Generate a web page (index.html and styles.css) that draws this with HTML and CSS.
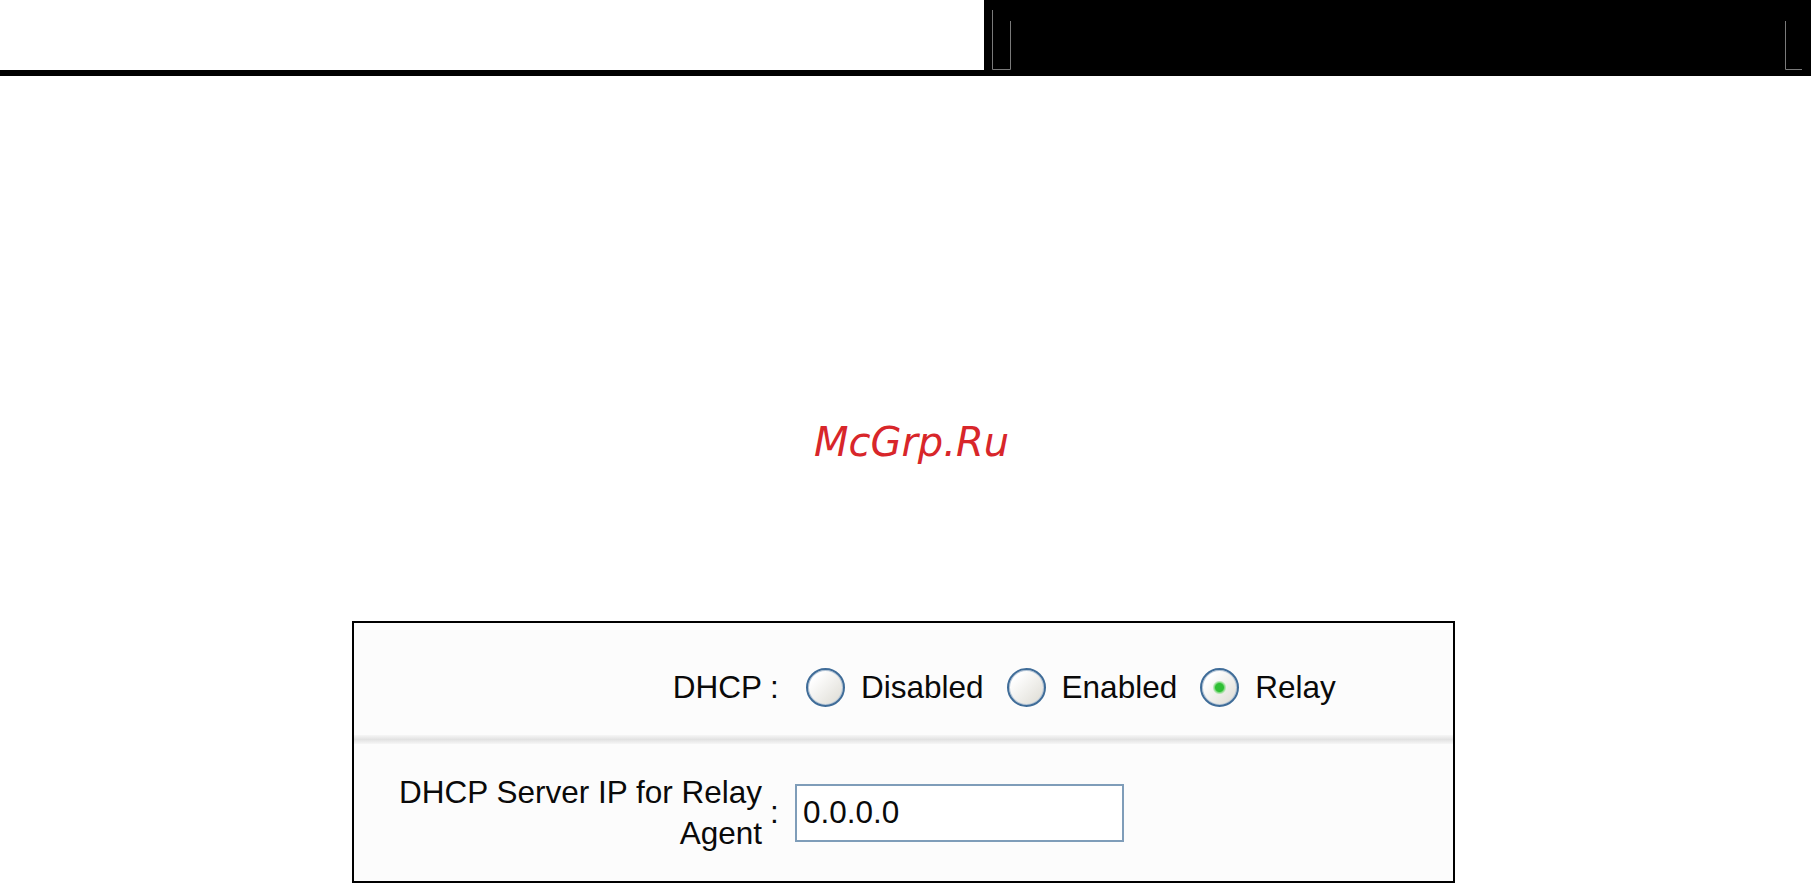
FILE: index.html
```html
<!DOCTYPE html>
<html lang="en">
<head>
    <meta charset="UTF-8">
    <meta name="viewport" content="width=device-width, initial-scale=1.0">
    <title>DHCP Settings</title>
    <link rel="stylesheet" href="styles.css">
</head>
<body>
    <div class="page-head">
        <div class="head-blank"></div>
        <div class="head-dark">
            <svg class="head-marks" width="827" height="70" viewBox="0 0 827 70">
                <!-- corner ticks of the page frame -->
                <path d="M8.5 10 V69.5 H26.5 V21" fill="none" stroke="#7a7a7a" stroke-width="1"/>
                <path d="M801.5 21 V69.5 H818" fill="none" stroke="#7a7a7a" stroke-width="1"/>
            </svg>
        </div>
    </div>
    <div class="head-rule"></div>

    <div class="stamp">McGrp.Ru</div>

    <form class="panel">
        <div class="row row-top">
            <div class="label">DHCP</div>
            <div class="colon">:</div>
            <div class="value">
                <label class="choice"><input type="radio" name="dhcp" class="radio"> Disabled</label>
                <label class="choice"><input type="radio" name="dhcp" class="radio"> Enabled</label>
                <label class="choice"><input type="radio" name="dhcp" class="radio" checked> Relay</label>
            </div>
        </div>
        <div class="divider"></div>
        <div class="row row-bottom">
            <div class="label">DHCP Server IP for Relay<br>Agent</div>
            <div class="colon">:</div>
            <div class="value">
                <input type="text" class="field" value="0.0.0.0">
            </div>
        </div>
    </form>
</body>
</html>
```

FILE: styles.css
```css
body {
    margin: 0;
    background: #fff;
    font-family: "Liberation Sans", Arial, sans-serif;
    color: #0a0a0a;
}

/* top strip: white on the left, black block on the right */
.page-head {
    display: flex;
    height: 70px;
}

.head-blank {
    width: 984px;
    flex-shrink: 0;
    background: #fff;
}

.head-dark {
    flex: 1;
    background: #000;
}

.head-marks {
    display: block;
}

.head-rule {
    height: 6px;
    background: #000;
}

.stamp {
    margin-top: 342px;
    padding-left: 12px;
    text-align: center;
    font-family: "DejaVu Sans", sans-serif;
    font-style: italic;
    font-size: 40px;
    line-height: 48px;
    color: #d8262a;
}

/* settings box */
.panel {
    margin: 155px 0 0 352px;
    width: 1103px;
    height: 262px;
    box-sizing: border-box;
    border: 2px solid #000;
    background: #fcfcfc;
    display: flex;
    flex-direction: column;
    font-size: 31.5px;
}

.row {
    display: grid;
    grid-template-columns: 408px 33px 1fr;
    align-items: center;
}

.row-top {
    height: 112px;
    padding-top: 16px;
    box-sizing: border-box;
}

.row-bottom {
    flex: 1;
}

.label {
    text-align: right;
    line-height: 41px;
}

.colon {
    padding-left: 8px;
}

.divider {
    height: 9px;
    background: linear-gradient(#f6f6f6, #e2e2e2 50%, #f6f6f6);
}

.value {
    display: flex;
    align-items: center;
}

.choice {
    display: flex;
    align-items: center;
    gap: 16px;
    margin-right: 23px;
}

.choice:first-child {
    margin-left: 11px;
}

.radio {
    appearance: none;
    margin: 0;
    width: 39px;
    height: 39px;
    border-radius: 50%;
    border: 2px solid #3f6c98;
    box-sizing: border-box;
    background: linear-gradient(135deg, #fff 20%, #dcdad2);
    box-shadow: inset 0 0 0 1px #b3c4d6;
}

.radio:checked {
    background:
        radial-gradient(circle, #2fbf34 0 4px, #7fd97f 5px, transparent 7px),
        linear-gradient(135deg, #fff 20%, #dcdad2);
}

.field {
    width: 329px;
    height: 58px;
    box-sizing: border-box;
    border: 2px solid #7f9db9;
    padding: 0 6px;
    margin: 0;
    background: #fff;
    font-family: "Liberation Sans", Arial, sans-serif;
    font-size: 31.5px;
    color: #0a0a0a;
}
```
